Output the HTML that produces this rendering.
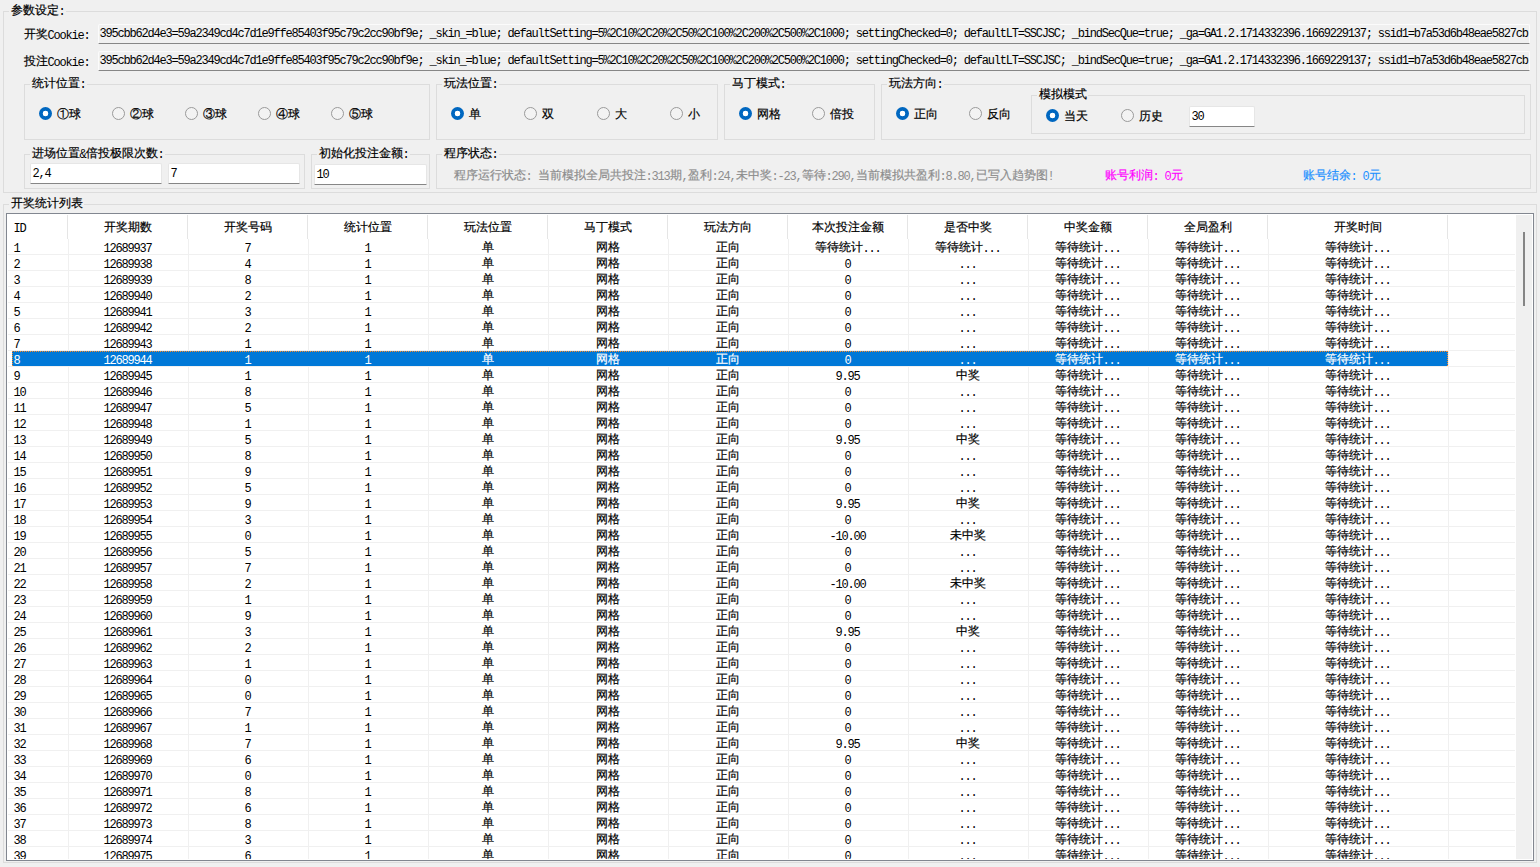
<!DOCTYPE html><html><head><meta charset="utf-8"><style>
*{margin:0;padding:0;box-sizing:border-box}
html,body{width:1540px;height:867px;overflow:hidden;background:#f0f0f0}
body{position:relative;font-family:"Liberation Sans",sans-serif;font-size:12px;color:#000}
.t,.gt,.y{position:absolute;white-space:nowrap;line-height:16px;height:16px;font-size:12px}
.gt{background:#f0f0f0;padding:0 1px 0 2px}
.y{font-family:"Liberation Sans",sans-serif;line-height:16px}
.a{font-family:"Liberation Mono",monospace;letter-spacing:-1.2px;position:relative;left:-0.5px}
.c{display:inline-block;font-family:"Liberation Sans",sans-serif;-webkit-text-stroke:0.2px currentColor;position:relative;top:-1px}
.w{color:#fff}
.g{position:absolute;border:1px solid #dcdcdc}
.r{position:absolute;width:13px;height:13px;border-radius:50%;border:1px solid #9a9a9a;background:#f3f3f3}
.r.on{border:0;background:radial-gradient(circle at 50% 50%,#fff 0,#fff 2.6px,#0067c0 3.1px)}
.tb{position:absolute;border:1px solid #e3e3e3;border-bottom:1px solid #868686;border-radius:2px 2px 0 0}
.lv{position:absolute;left:6px;top:213px;width:1528px;height:648px;border:1px solid #828790;background:#fff}
.sb{position:absolute;left:1516px;top:215px;width:16px;height:644px;background:#f0f0f0}
.thumb{position:absolute;left:1523px;top:232px;width:2px;height:74px;background:#858585}
.hs{position:absolute;top:215px;width:1px;height:24px;background:#e5e5e5}
.vg{position:absolute;top:239px;width:1px;height:620px;background:#f0f0f0}
.hg{position:absolute;left:8px;width:1507px;height:1px;background:#f0f0f0}
.clip{position:absolute;left:0;top:0;width:1532px;height:859px;overflow:hidden}
.sel{position:absolute;left:12px;width:1436px;height:15px;background:#0078d7}
.ft{position:absolute;left:12px;width:1436px;height:1px;background:repeating-linear-gradient(90deg,#ff8a24 0 1px,#0078d7 1px 2px)}
.fl{position:absolute;width:1px;height:15px;background:repeating-linear-gradient(180deg,#ff8a24 0 1px,#0078d7 1px 2px)}
</style></head><body>
<div class="g" style="left:3px;top:11px;width:1534px;height:182px"></div>
<div class="gt" style="left:9px;top:3px"><span class="c" style="width:48px">参数设定</span><span class="a">:</span></div>
<div class="t" style="left:24px;top:27px;"><span class="c" style="width:24px">开奖</span><span class="a">Cookie:</span></div>
<div class="t" style="left:24px;top:54px;"><span class="c" style="width:24px">投注</span><span class="a">Cookie:</span></div>
<div class="tb" style="left:98px;top:24px;width:1432px;height:20px;background:#f0f0f0;border-color:#fbfbfb #fbfbfb #868686 #fbfbfb"></div>
<div class="t" style="left:100px;top:25px;"><span class="a">395cbb62d4e3=59a2349cd4c7d1e9ffe85403f95c79c2cc90bf9e;&#160;_skin_=blue;&#160;defaultSetting=5%2C10%2C20%2C50%2C100%2C200%2C500%2C1000;&#160;settingChecked=0;&#160;defaultLT=SSCJSC;&#160;_bindSecQue=true;&#160;_ga=GA1.2.1714332396.1669229137;&#160;ssid1=b7a53d6b48eae5827cb</span></div>
<div class="tb" style="left:98px;top:51px;width:1432px;height:20px;background:#f0f0f0;border-color:#fbfbfb #fbfbfb #868686 #fbfbfb"></div>
<div class="t" style="left:100px;top:52px;"><span class="a">395cbb62d4e3=59a2349cd4c7d1e9ffe85403f95c79c2cc90bf9e;&#160;_skin_=blue;&#160;defaultSetting=5%2C10%2C20%2C50%2C100%2C200%2C500%2C1000;&#160;settingChecked=0;&#160;defaultLT=SSCJSC;&#160;_bindSecQue=true;&#160;_ga=GA1.2.1714332396.1669229137;&#160;ssid1=b7a53d6b48eae5827cb</span></div>
<div class="g" style="left:24px;top:84px;width:406px;height:56px"></div>
<div class="gt" style="left:30px;top:76px"><span class="c" style="width:48px">统计位置</span><span class="a">:</span></div>
<div class="r on" style="left:39px;top:107px"></div>
<div class="t" style="left:57px;top:107px;"><span class="c" style="width:24px">①球</span></div>
<div class="r" style="left:112px;top:107px"></div>
<div class="t" style="left:130px;top:107px;"><span class="c" style="width:24px">②球</span></div>
<div class="r" style="left:185px;top:107px"></div>
<div class="t" style="left:203px;top:107px;"><span class="c" style="width:24px">③球</span></div>
<div class="r" style="left:258px;top:107px"></div>
<div class="t" style="left:276px;top:107px;"><span class="c" style="width:24px">④球</span></div>
<div class="r" style="left:331px;top:107px"></div>
<div class="t" style="left:349px;top:107px;"><span class="c" style="width:24px">⑤球</span></div>
<div class="g" style="left:436px;top:84px;width:282px;height:56px"></div>
<div class="gt" style="left:442px;top:76px"><span class="c" style="width:48px">玩法位置</span><span class="a">:</span></div>
<div class="r on" style="left:451px;top:107px"></div>
<div class="t" style="left:469px;top:107px;"><span class="c" style="width:12px">单</span></div>
<div class="r" style="left:524px;top:107px"></div>
<div class="t" style="left:542px;top:107px;"><span class="c" style="width:12px">双</span></div>
<div class="r" style="left:597px;top:107px"></div>
<div class="t" style="left:615px;top:107px;"><span class="c" style="width:12px">大</span></div>
<div class="r" style="left:670px;top:107px"></div>
<div class="t" style="left:688px;top:107px;"><span class="c" style="width:12px">小</span></div>
<div class="g" style="left:724px;top:84px;width:151px;height:56px"></div>
<div class="gt" style="left:730px;top:76px"><span class="c" style="width:48px">马丁模式</span><span class="a">:</span></div>
<div class="r on" style="left:739px;top:107px"></div>
<div class="t" style="left:757px;top:107px;"><span class="c" style="width:24px">网格</span></div>
<div class="r" style="left:812px;top:107px"></div>
<div class="t" style="left:830px;top:107px;"><span class="c" style="width:24px">倍投</span></div>
<div class="g" style="left:881px;top:84px;width:650px;height:56px"></div>
<div class="gt" style="left:887px;top:76px"><span class="c" style="width:48px">玩法方向</span><span class="a">:</span></div>
<div class="r on" style="left:896px;top:107px"></div>
<div class="t" style="left:914px;top:107px;"><span class="c" style="width:24px">正向</span></div>
<div class="r" style="left:969px;top:107px"></div>
<div class="t" style="left:987px;top:107px;"><span class="c" style="width:24px">反向</span></div>
<div class="g" style="left:1031px;top:95px;width:494px;height:39px"></div>
<div class="gt" style="left:1037px;top:87px"><span class="c" style="width:48px">模拟模式</span></div>
<div class="r on" style="left:1046px;top:109px"></div>
<div class="t" style="left:1064px;top:109px;"><span class="c" style="width:24px">当天</span></div>
<div class="r" style="left:1121px;top:109px"></div>
<div class="t" style="left:1139px;top:109px;"><span class="c" style="width:24px">历史</span></div>
<div class="tb" style="left:1189px;top:106px;width:66px;height:21px;background:#fff;border-color:#e6e6e6 #e6e6e6 #868686 #e6e6e6"></div>
<div class="t" style="left:1192px;top:108px;"><span class="a">30</span></div>
<div class="g" style="left:24px;top:154px;width:281px;height:35px"></div>
<div class="gt" style="left:30px;top:146px"><span class="c" style="width:48px">进场位置</span><span class="a">&amp;</span><span class="c" style="width:72px">倍投极限次数</span><span class="a">:</span></div>
<div class="tb" style="left:30px;top:163px;width:132px;height:21px;background:#fff;border-color:#e6e6e6 #e6e6e6 #868686 #e6e6e6"></div>
<div class="t" style="left:33px;top:165px;"><span class="a">2,4</span></div>
<div class="tb" style="left:168px;top:163px;width:132px;height:21px;background:#fff;border-color:#e6e6e6 #e6e6e6 #868686 #e6e6e6"></div>
<div class="t" style="left:171px;top:165px;"><span class="a">7</span></div>
<div class="g" style="left:311px;top:154px;width:119px;height:35px"></div>
<div class="gt" style="left:317px;top:146px"><span class="c" style="width:84px">初始化投注金额</span><span class="a">:</span></div>
<div class="tb" style="left:314px;top:164px;width:113px;height:21px;background:#fff;border-color:#e6e6e6 #e6e6e6 #868686 #e6e6e6"></div>
<div class="t" style="left:317px;top:166px;"><span class="a">10</span></div>
<div class="g" style="left:436px;top:154px;width:1095px;height:35px"></div>
<div class="gt" style="left:442px;top:146px"><span class="c" style="width:48px">程序状态</span><span class="a">:</span></div>
<div class="t" style="left:454px;top:168px;color:#8d8d8d"><span class="c" style="width:72px">程序运行状态</span><span class="a">:&#160;</span><span class="c" style="width:108px">当前模拟全局共投注</span><span class="a">:313</span><span class="c" style="width:12px">期</span><span class="a">,</span><span class="c" style="width:24px">盈利</span><span class="a">:24,</span><span class="c" style="width:36px">未中奖</span><span class="a">:-23,</span><span class="c" style="width:24px">等待</span><span class="a">:290,</span><span class="c" style="width:84px">当前模拟共盈利</span><span class="a">:8.80,</span><span class="c" style="width:72px">已写入趋势图</span><span class="a">!</span></div>
<div class="t" style="left:1105px;top:168px;color:#ff00ff"><span class="c" style="width:48px">账号利润</span><span class="a">:&#160;0</span><span class="c" style="width:12px">元</span></div>
<div class="t" style="left:1303px;top:168px;color:#1e90ff"><span class="c" style="width:48px">账号结余</span><span class="a">:&#160;0</span><span class="c" style="width:12px">元</span></div>
<div class="g" style="left:3px;top:204px;width:1534px;height:659px"></div>
<div class="gt" style="left:9px;top:196px"><span class="c" style="width:72px">开奖统计列表</span></div>
<div class="lv"></div>
<div class="sb"></div><div class="thumb"></div>
<div class="hs" style="left:67px"></div>
<div class="t" style="left:14px;top:220px;"><span class="a">ID</span></div>
<div class="hs" style="left:187px"></div>
<div class="t" style="left:104px;top:220px;"><span class="c" style="width:48px">开奖期数</span></div>
<div class="hs" style="left:307px"></div>
<div class="t" style="left:224px;top:220px;"><span class="c" style="width:48px">开奖号码</span></div>
<div class="hs" style="left:427px"></div>
<div class="t" style="left:344px;top:220px;"><span class="c" style="width:48px">统计位置</span></div>
<div class="hs" style="left:547px"></div>
<div class="t" style="left:464px;top:220px;"><span class="c" style="width:48px">玩法位置</span></div>
<div class="hs" style="left:667px"></div>
<div class="t" style="left:584px;top:220px;"><span class="c" style="width:48px">马丁模式</span></div>
<div class="hs" style="left:787px"></div>
<div class="t" style="left:704px;top:220px;"><span class="c" style="width:48px">玩法方向</span></div>
<div class="hs" style="left:907px"></div>
<div class="t" style="left:812px;top:220px;"><span class="c" style="width:72px">本次投注金额</span></div>
<div class="hs" style="left:1027px"></div>
<div class="t" style="left:944px;top:220px;"><span class="c" style="width:48px">是否中奖</span></div>
<div class="hs" style="left:1147px"></div>
<div class="t" style="left:1064px;top:220px;"><span class="c" style="width:48px">中奖金额</span></div>
<div class="hs" style="left:1267px"></div>
<div class="t" style="left:1184px;top:220px;"><span class="c" style="width:48px">全局盈利</span></div>
<div class="hs" style="left:1447px"></div>
<div class="t" style="left:1334px;top:220px;"><span class="c" style="width:48px">开奖时间</span></div>
<div class="clip">
<div class="vg" style="left:68px"></div>
<div class="vg" style="left:188px"></div>
<div class="vg" style="left:308px"></div>
<div class="vg" style="left:428px"></div>
<div class="vg" style="left:548px"></div>
<div class="vg" style="left:668px"></div>
<div class="vg" style="left:788px"></div>
<div class="vg" style="left:908px"></div>
<div class="vg" style="left:1028px"></div>
<div class="vg" style="left:1148px"></div>
<div class="vg" style="left:1268px"></div>
<div class="vg" style="left:1448px"></div>
<div class="hg" style="top:254px"></div>
<div class="hg" style="top:270px"></div>
<div class="hg" style="top:286px"></div>
<div class="hg" style="top:302px"></div>
<div class="hg" style="top:318px"></div>
<div class="hg" style="top:334px"></div>
<div class="hg" style="top:350px"></div>
<div class="hg" style="top:366px"></div>
<div class="hg" style="top:382px"></div>
<div class="hg" style="top:398px"></div>
<div class="hg" style="top:414px"></div>
<div class="hg" style="top:430px"></div>
<div class="hg" style="top:446px"></div>
<div class="hg" style="top:462px"></div>
<div class="hg" style="top:478px"></div>
<div class="hg" style="top:494px"></div>
<div class="hg" style="top:510px"></div>
<div class="hg" style="top:526px"></div>
<div class="hg" style="top:542px"></div>
<div class="hg" style="top:558px"></div>
<div class="hg" style="top:574px"></div>
<div class="hg" style="top:590px"></div>
<div class="hg" style="top:606px"></div>
<div class="hg" style="top:622px"></div>
<div class="hg" style="top:638px"></div>
<div class="hg" style="top:654px"></div>
<div class="hg" style="top:670px"></div>
<div class="hg" style="top:686px"></div>
<div class="hg" style="top:702px"></div>
<div class="hg" style="top:718px"></div>
<div class="hg" style="top:734px"></div>
<div class="hg" style="top:750px"></div>
<div class="hg" style="top:766px"></div>
<div class="hg" style="top:782px"></div>
<div class="hg" style="top:798px"></div>
<div class="hg" style="top:814px"></div>
<div class="hg" style="top:830px"></div>
<div class="hg" style="top:846px"></div>
<div class="hg" style="top:862px"></div>
<div class="sel" style="top:351px"></div><div class="ft" style="top:351px"></div><div class="fl" style="left:12px;top:351px"></div><div class="fl" style="left:1447px;top:351px"></div>
<div class="t" style="left:14px;top:240px;"><span class="a">1</span></div>
<div class="t" style="left:104px;top:240px;"><span class="a">12689937</span></div>
<div class="t" style="left:245px;top:240px;"><span class="a">7</span></div>
<div class="t" style="left:365px;top:240px;"><span class="a">1</span></div>
<div class="t" style="left:482px;top:240px;"><span class="c" style="width:12px">单</span></div>
<div class="t" style="left:596px;top:240px;"><span class="c" style="width:24px">网格</span></div>
<div class="t" style="left:716px;top:240px;"><span class="c" style="width:24px">正向</span></div>
<div class="t" style="left:815px;top:240px;"><span class="c" style="width:48px">等待统计</span><span class="a">...</span></div>
<div class="t" style="left:935px;top:240px;"><span class="c" style="width:48px">等待统计</span><span class="a">...</span></div>
<div class="t" style="left:1055px;top:240px;"><span class="c" style="width:48px">等待统计</span><span class="a">...</span></div>
<div class="t" style="left:1175px;top:240px;"><span class="c" style="width:48px">等待统计</span><span class="a">...</span></div>
<div class="t" style="left:1325px;top:240px;"><span class="c" style="width:48px">等待统计</span><span class="a">...</span></div>
<div class="t" style="left:14px;top:256px;"><span class="a">2</span></div>
<div class="t" style="left:104px;top:256px;"><span class="a">12689938</span></div>
<div class="t" style="left:245px;top:256px;"><span class="a">4</span></div>
<div class="t" style="left:365px;top:256px;"><span class="a">1</span></div>
<div class="t" style="left:482px;top:256px;"><span class="c" style="width:12px">单</span></div>
<div class="t" style="left:596px;top:256px;"><span class="c" style="width:24px">网格</span></div>
<div class="t" style="left:716px;top:256px;"><span class="c" style="width:24px">正向</span></div>
<div class="t" style="left:845px;top:256px;"><span class="a">0</span></div>
<div class="t" style="left:959px;top:256px;"><span class="a">...</span></div>
<div class="t" style="left:1055px;top:256px;"><span class="c" style="width:48px">等待统计</span><span class="a">...</span></div>
<div class="t" style="left:1175px;top:256px;"><span class="c" style="width:48px">等待统计</span><span class="a">...</span></div>
<div class="t" style="left:1325px;top:256px;"><span class="c" style="width:48px">等待统计</span><span class="a">...</span></div>
<div class="t" style="left:14px;top:272px;"><span class="a">3</span></div>
<div class="t" style="left:104px;top:272px;"><span class="a">12689939</span></div>
<div class="t" style="left:245px;top:272px;"><span class="a">8</span></div>
<div class="t" style="left:365px;top:272px;"><span class="a">1</span></div>
<div class="t" style="left:482px;top:272px;"><span class="c" style="width:12px">单</span></div>
<div class="t" style="left:596px;top:272px;"><span class="c" style="width:24px">网格</span></div>
<div class="t" style="left:716px;top:272px;"><span class="c" style="width:24px">正向</span></div>
<div class="t" style="left:845px;top:272px;"><span class="a">0</span></div>
<div class="t" style="left:959px;top:272px;"><span class="a">...</span></div>
<div class="t" style="left:1055px;top:272px;"><span class="c" style="width:48px">等待统计</span><span class="a">...</span></div>
<div class="t" style="left:1175px;top:272px;"><span class="c" style="width:48px">等待统计</span><span class="a">...</span></div>
<div class="t" style="left:1325px;top:272px;"><span class="c" style="width:48px">等待统计</span><span class="a">...</span></div>
<div class="t" style="left:14px;top:288px;"><span class="a">4</span></div>
<div class="t" style="left:104px;top:288px;"><span class="a">12689940</span></div>
<div class="t" style="left:245px;top:288px;"><span class="a">2</span></div>
<div class="t" style="left:365px;top:288px;"><span class="a">1</span></div>
<div class="t" style="left:482px;top:288px;"><span class="c" style="width:12px">单</span></div>
<div class="t" style="left:596px;top:288px;"><span class="c" style="width:24px">网格</span></div>
<div class="t" style="left:716px;top:288px;"><span class="c" style="width:24px">正向</span></div>
<div class="t" style="left:845px;top:288px;"><span class="a">0</span></div>
<div class="t" style="left:959px;top:288px;"><span class="a">...</span></div>
<div class="t" style="left:1055px;top:288px;"><span class="c" style="width:48px">等待统计</span><span class="a">...</span></div>
<div class="t" style="left:1175px;top:288px;"><span class="c" style="width:48px">等待统计</span><span class="a">...</span></div>
<div class="t" style="left:1325px;top:288px;"><span class="c" style="width:48px">等待统计</span><span class="a">...</span></div>
<div class="t" style="left:14px;top:304px;"><span class="a">5</span></div>
<div class="t" style="left:104px;top:304px;"><span class="a">12689941</span></div>
<div class="t" style="left:245px;top:304px;"><span class="a">3</span></div>
<div class="t" style="left:365px;top:304px;"><span class="a">1</span></div>
<div class="t" style="left:482px;top:304px;"><span class="c" style="width:12px">单</span></div>
<div class="t" style="left:596px;top:304px;"><span class="c" style="width:24px">网格</span></div>
<div class="t" style="left:716px;top:304px;"><span class="c" style="width:24px">正向</span></div>
<div class="t" style="left:845px;top:304px;"><span class="a">0</span></div>
<div class="t" style="left:959px;top:304px;"><span class="a">...</span></div>
<div class="t" style="left:1055px;top:304px;"><span class="c" style="width:48px">等待统计</span><span class="a">...</span></div>
<div class="t" style="left:1175px;top:304px;"><span class="c" style="width:48px">等待统计</span><span class="a">...</span></div>
<div class="t" style="left:1325px;top:304px;"><span class="c" style="width:48px">等待统计</span><span class="a">...</span></div>
<div class="t" style="left:14px;top:320px;"><span class="a">6</span></div>
<div class="t" style="left:104px;top:320px;"><span class="a">12689942</span></div>
<div class="t" style="left:245px;top:320px;"><span class="a">2</span></div>
<div class="t" style="left:365px;top:320px;"><span class="a">1</span></div>
<div class="t" style="left:482px;top:320px;"><span class="c" style="width:12px">单</span></div>
<div class="t" style="left:596px;top:320px;"><span class="c" style="width:24px">网格</span></div>
<div class="t" style="left:716px;top:320px;"><span class="c" style="width:24px">正向</span></div>
<div class="t" style="left:845px;top:320px;"><span class="a">0</span></div>
<div class="t" style="left:959px;top:320px;"><span class="a">...</span></div>
<div class="t" style="left:1055px;top:320px;"><span class="c" style="width:48px">等待统计</span><span class="a">...</span></div>
<div class="t" style="left:1175px;top:320px;"><span class="c" style="width:48px">等待统计</span><span class="a">...</span></div>
<div class="t" style="left:1325px;top:320px;"><span class="c" style="width:48px">等待统计</span><span class="a">...</span></div>
<div class="t" style="left:14px;top:336px;"><span class="a">7</span></div>
<div class="t" style="left:104px;top:336px;"><span class="a">12689943</span></div>
<div class="t" style="left:245px;top:336px;"><span class="a">1</span></div>
<div class="t" style="left:365px;top:336px;"><span class="a">1</span></div>
<div class="t" style="left:482px;top:336px;"><span class="c" style="width:12px">单</span></div>
<div class="t" style="left:596px;top:336px;"><span class="c" style="width:24px">网格</span></div>
<div class="t" style="left:716px;top:336px;"><span class="c" style="width:24px">正向</span></div>
<div class="t" style="left:845px;top:336px;"><span class="a">0</span></div>
<div class="t" style="left:959px;top:336px;"><span class="a">...</span></div>
<div class="t" style="left:1055px;top:336px;"><span class="c" style="width:48px">等待统计</span><span class="a">...</span></div>
<div class="t" style="left:1175px;top:336px;"><span class="c" style="width:48px">等待统计</span><span class="a">...</span></div>
<div class="t" style="left:1325px;top:336px;"><span class="c" style="width:48px">等待统计</span><span class="a">...</span></div>
<div class="t w" style="left:14px;top:352px;"><span class="a">8</span></div>
<div class="t w" style="left:104px;top:352px;"><span class="a">12689944</span></div>
<div class="t w" style="left:245px;top:352px;"><span class="a">1</span></div>
<div class="t w" style="left:365px;top:352px;"><span class="a">1</span></div>
<div class="t w" style="left:482px;top:352px;"><span class="c" style="width:12px">单</span></div>
<div class="t w" style="left:596px;top:352px;"><span class="c" style="width:24px">网格</span></div>
<div class="t w" style="left:716px;top:352px;"><span class="c" style="width:24px">正向</span></div>
<div class="t w" style="left:845px;top:352px;"><span class="a">0</span></div>
<div class="t w" style="left:959px;top:352px;"><span class="a">...</span></div>
<div class="t w" style="left:1055px;top:352px;"><span class="c" style="width:48px">等待统计</span><span class="a">...</span></div>
<div class="t w" style="left:1175px;top:352px;"><span class="c" style="width:48px">等待统计</span><span class="a">...</span></div>
<div class="t w" style="left:1325px;top:352px;"><span class="c" style="width:48px">等待统计</span><span class="a">...</span></div>
<div class="t" style="left:14px;top:368px;"><span class="a">9</span></div>
<div class="t" style="left:104px;top:368px;"><span class="a">12689945</span></div>
<div class="t" style="left:245px;top:368px;"><span class="a">1</span></div>
<div class="t" style="left:365px;top:368px;"><span class="a">1</span></div>
<div class="t" style="left:482px;top:368px;"><span class="c" style="width:12px">单</span></div>
<div class="t" style="left:596px;top:368px;"><span class="c" style="width:24px">网格</span></div>
<div class="t" style="left:716px;top:368px;"><span class="c" style="width:24px">正向</span></div>
<div class="t" style="left:836px;top:368px;"><span class="a">9.95</span></div>
<div class="t" style="left:956px;top:368px;"><span class="c" style="width:24px">中奖</span></div>
<div class="t" style="left:1055px;top:368px;"><span class="c" style="width:48px">等待统计</span><span class="a">...</span></div>
<div class="t" style="left:1175px;top:368px;"><span class="c" style="width:48px">等待统计</span><span class="a">...</span></div>
<div class="t" style="left:1325px;top:368px;"><span class="c" style="width:48px">等待统计</span><span class="a">...</span></div>
<div class="t" style="left:14px;top:384px;"><span class="a">10</span></div>
<div class="t" style="left:104px;top:384px;"><span class="a">12689946</span></div>
<div class="t" style="left:245px;top:384px;"><span class="a">8</span></div>
<div class="t" style="left:365px;top:384px;"><span class="a">1</span></div>
<div class="t" style="left:482px;top:384px;"><span class="c" style="width:12px">单</span></div>
<div class="t" style="left:596px;top:384px;"><span class="c" style="width:24px">网格</span></div>
<div class="t" style="left:716px;top:384px;"><span class="c" style="width:24px">正向</span></div>
<div class="t" style="left:845px;top:384px;"><span class="a">0</span></div>
<div class="t" style="left:959px;top:384px;"><span class="a">...</span></div>
<div class="t" style="left:1055px;top:384px;"><span class="c" style="width:48px">等待统计</span><span class="a">...</span></div>
<div class="t" style="left:1175px;top:384px;"><span class="c" style="width:48px">等待统计</span><span class="a">...</span></div>
<div class="t" style="left:1325px;top:384px;"><span class="c" style="width:48px">等待统计</span><span class="a">...</span></div>
<div class="t" style="left:14px;top:400px;"><span class="a">11</span></div>
<div class="t" style="left:104px;top:400px;"><span class="a">12689947</span></div>
<div class="t" style="left:245px;top:400px;"><span class="a">5</span></div>
<div class="t" style="left:365px;top:400px;"><span class="a">1</span></div>
<div class="t" style="left:482px;top:400px;"><span class="c" style="width:12px">单</span></div>
<div class="t" style="left:596px;top:400px;"><span class="c" style="width:24px">网格</span></div>
<div class="t" style="left:716px;top:400px;"><span class="c" style="width:24px">正向</span></div>
<div class="t" style="left:845px;top:400px;"><span class="a">0</span></div>
<div class="t" style="left:959px;top:400px;"><span class="a">...</span></div>
<div class="t" style="left:1055px;top:400px;"><span class="c" style="width:48px">等待统计</span><span class="a">...</span></div>
<div class="t" style="left:1175px;top:400px;"><span class="c" style="width:48px">等待统计</span><span class="a">...</span></div>
<div class="t" style="left:1325px;top:400px;"><span class="c" style="width:48px">等待统计</span><span class="a">...</span></div>
<div class="t" style="left:14px;top:416px;"><span class="a">12</span></div>
<div class="t" style="left:104px;top:416px;"><span class="a">12689948</span></div>
<div class="t" style="left:245px;top:416px;"><span class="a">1</span></div>
<div class="t" style="left:365px;top:416px;"><span class="a">1</span></div>
<div class="t" style="left:482px;top:416px;"><span class="c" style="width:12px">单</span></div>
<div class="t" style="left:596px;top:416px;"><span class="c" style="width:24px">网格</span></div>
<div class="t" style="left:716px;top:416px;"><span class="c" style="width:24px">正向</span></div>
<div class="t" style="left:845px;top:416px;"><span class="a">0</span></div>
<div class="t" style="left:959px;top:416px;"><span class="a">...</span></div>
<div class="t" style="left:1055px;top:416px;"><span class="c" style="width:48px">等待统计</span><span class="a">...</span></div>
<div class="t" style="left:1175px;top:416px;"><span class="c" style="width:48px">等待统计</span><span class="a">...</span></div>
<div class="t" style="left:1325px;top:416px;"><span class="c" style="width:48px">等待统计</span><span class="a">...</span></div>
<div class="t" style="left:14px;top:432px;"><span class="a">13</span></div>
<div class="t" style="left:104px;top:432px;"><span class="a">12689949</span></div>
<div class="t" style="left:245px;top:432px;"><span class="a">5</span></div>
<div class="t" style="left:365px;top:432px;"><span class="a">1</span></div>
<div class="t" style="left:482px;top:432px;"><span class="c" style="width:12px">单</span></div>
<div class="t" style="left:596px;top:432px;"><span class="c" style="width:24px">网格</span></div>
<div class="t" style="left:716px;top:432px;"><span class="c" style="width:24px">正向</span></div>
<div class="t" style="left:836px;top:432px;"><span class="a">9.95</span></div>
<div class="t" style="left:956px;top:432px;"><span class="c" style="width:24px">中奖</span></div>
<div class="t" style="left:1055px;top:432px;"><span class="c" style="width:48px">等待统计</span><span class="a">...</span></div>
<div class="t" style="left:1175px;top:432px;"><span class="c" style="width:48px">等待统计</span><span class="a">...</span></div>
<div class="t" style="left:1325px;top:432px;"><span class="c" style="width:48px">等待统计</span><span class="a">...</span></div>
<div class="t" style="left:14px;top:448px;"><span class="a">14</span></div>
<div class="t" style="left:104px;top:448px;"><span class="a">12689950</span></div>
<div class="t" style="left:245px;top:448px;"><span class="a">8</span></div>
<div class="t" style="left:365px;top:448px;"><span class="a">1</span></div>
<div class="t" style="left:482px;top:448px;"><span class="c" style="width:12px">单</span></div>
<div class="t" style="left:596px;top:448px;"><span class="c" style="width:24px">网格</span></div>
<div class="t" style="left:716px;top:448px;"><span class="c" style="width:24px">正向</span></div>
<div class="t" style="left:845px;top:448px;"><span class="a">0</span></div>
<div class="t" style="left:959px;top:448px;"><span class="a">...</span></div>
<div class="t" style="left:1055px;top:448px;"><span class="c" style="width:48px">等待统计</span><span class="a">...</span></div>
<div class="t" style="left:1175px;top:448px;"><span class="c" style="width:48px">等待统计</span><span class="a">...</span></div>
<div class="t" style="left:1325px;top:448px;"><span class="c" style="width:48px">等待统计</span><span class="a">...</span></div>
<div class="t" style="left:14px;top:464px;"><span class="a">15</span></div>
<div class="t" style="left:104px;top:464px;"><span class="a">12689951</span></div>
<div class="t" style="left:245px;top:464px;"><span class="a">9</span></div>
<div class="t" style="left:365px;top:464px;"><span class="a">1</span></div>
<div class="t" style="left:482px;top:464px;"><span class="c" style="width:12px">单</span></div>
<div class="t" style="left:596px;top:464px;"><span class="c" style="width:24px">网格</span></div>
<div class="t" style="left:716px;top:464px;"><span class="c" style="width:24px">正向</span></div>
<div class="t" style="left:845px;top:464px;"><span class="a">0</span></div>
<div class="t" style="left:959px;top:464px;"><span class="a">...</span></div>
<div class="t" style="left:1055px;top:464px;"><span class="c" style="width:48px">等待统计</span><span class="a">...</span></div>
<div class="t" style="left:1175px;top:464px;"><span class="c" style="width:48px">等待统计</span><span class="a">...</span></div>
<div class="t" style="left:1325px;top:464px;"><span class="c" style="width:48px">等待统计</span><span class="a">...</span></div>
<div class="t" style="left:14px;top:480px;"><span class="a">16</span></div>
<div class="t" style="left:104px;top:480px;"><span class="a">12689952</span></div>
<div class="t" style="left:245px;top:480px;"><span class="a">5</span></div>
<div class="t" style="left:365px;top:480px;"><span class="a">1</span></div>
<div class="t" style="left:482px;top:480px;"><span class="c" style="width:12px">单</span></div>
<div class="t" style="left:596px;top:480px;"><span class="c" style="width:24px">网格</span></div>
<div class="t" style="left:716px;top:480px;"><span class="c" style="width:24px">正向</span></div>
<div class="t" style="left:845px;top:480px;"><span class="a">0</span></div>
<div class="t" style="left:959px;top:480px;"><span class="a">...</span></div>
<div class="t" style="left:1055px;top:480px;"><span class="c" style="width:48px">等待统计</span><span class="a">...</span></div>
<div class="t" style="left:1175px;top:480px;"><span class="c" style="width:48px">等待统计</span><span class="a">...</span></div>
<div class="t" style="left:1325px;top:480px;"><span class="c" style="width:48px">等待统计</span><span class="a">...</span></div>
<div class="t" style="left:14px;top:496px;"><span class="a">17</span></div>
<div class="t" style="left:104px;top:496px;"><span class="a">12689953</span></div>
<div class="t" style="left:245px;top:496px;"><span class="a">9</span></div>
<div class="t" style="left:365px;top:496px;"><span class="a">1</span></div>
<div class="t" style="left:482px;top:496px;"><span class="c" style="width:12px">单</span></div>
<div class="t" style="left:596px;top:496px;"><span class="c" style="width:24px">网格</span></div>
<div class="t" style="left:716px;top:496px;"><span class="c" style="width:24px">正向</span></div>
<div class="t" style="left:836px;top:496px;"><span class="a">9.95</span></div>
<div class="t" style="left:956px;top:496px;"><span class="c" style="width:24px">中奖</span></div>
<div class="t" style="left:1055px;top:496px;"><span class="c" style="width:48px">等待统计</span><span class="a">...</span></div>
<div class="t" style="left:1175px;top:496px;"><span class="c" style="width:48px">等待统计</span><span class="a">...</span></div>
<div class="t" style="left:1325px;top:496px;"><span class="c" style="width:48px">等待统计</span><span class="a">...</span></div>
<div class="t" style="left:14px;top:512px;"><span class="a">18</span></div>
<div class="t" style="left:104px;top:512px;"><span class="a">12689954</span></div>
<div class="t" style="left:245px;top:512px;"><span class="a">3</span></div>
<div class="t" style="left:365px;top:512px;"><span class="a">1</span></div>
<div class="t" style="left:482px;top:512px;"><span class="c" style="width:12px">单</span></div>
<div class="t" style="left:596px;top:512px;"><span class="c" style="width:24px">网格</span></div>
<div class="t" style="left:716px;top:512px;"><span class="c" style="width:24px">正向</span></div>
<div class="t" style="left:845px;top:512px;"><span class="a">0</span></div>
<div class="t" style="left:959px;top:512px;"><span class="a">...</span></div>
<div class="t" style="left:1055px;top:512px;"><span class="c" style="width:48px">等待统计</span><span class="a">...</span></div>
<div class="t" style="left:1175px;top:512px;"><span class="c" style="width:48px">等待统计</span><span class="a">...</span></div>
<div class="t" style="left:1325px;top:512px;"><span class="c" style="width:48px">等待统计</span><span class="a">...</span></div>
<div class="t" style="left:14px;top:528px;"><span class="a">19</span></div>
<div class="t" style="left:104px;top:528px;"><span class="a">12689955</span></div>
<div class="t" style="left:245px;top:528px;"><span class="a">0</span></div>
<div class="t" style="left:365px;top:528px;"><span class="a">1</span></div>
<div class="t" style="left:482px;top:528px;"><span class="c" style="width:12px">单</span></div>
<div class="t" style="left:596px;top:528px;"><span class="c" style="width:24px">网格</span></div>
<div class="t" style="left:716px;top:528px;"><span class="c" style="width:24px">正向</span></div>
<div class="t" style="left:830px;top:528px;"><span class="a">-10.00</span></div>
<div class="t" style="left:950px;top:528px;"><span class="c" style="width:36px">未中奖</span></div>
<div class="t" style="left:1055px;top:528px;"><span class="c" style="width:48px">等待统计</span><span class="a">...</span></div>
<div class="t" style="left:1175px;top:528px;"><span class="c" style="width:48px">等待统计</span><span class="a">...</span></div>
<div class="t" style="left:1325px;top:528px;"><span class="c" style="width:48px">等待统计</span><span class="a">...</span></div>
<div class="t" style="left:14px;top:544px;"><span class="a">20</span></div>
<div class="t" style="left:104px;top:544px;"><span class="a">12689956</span></div>
<div class="t" style="left:245px;top:544px;"><span class="a">5</span></div>
<div class="t" style="left:365px;top:544px;"><span class="a">1</span></div>
<div class="t" style="left:482px;top:544px;"><span class="c" style="width:12px">单</span></div>
<div class="t" style="left:596px;top:544px;"><span class="c" style="width:24px">网格</span></div>
<div class="t" style="left:716px;top:544px;"><span class="c" style="width:24px">正向</span></div>
<div class="t" style="left:845px;top:544px;"><span class="a">0</span></div>
<div class="t" style="left:959px;top:544px;"><span class="a">...</span></div>
<div class="t" style="left:1055px;top:544px;"><span class="c" style="width:48px">等待统计</span><span class="a">...</span></div>
<div class="t" style="left:1175px;top:544px;"><span class="c" style="width:48px">等待统计</span><span class="a">...</span></div>
<div class="t" style="left:1325px;top:544px;"><span class="c" style="width:48px">等待统计</span><span class="a">...</span></div>
<div class="t" style="left:14px;top:560px;"><span class="a">21</span></div>
<div class="t" style="left:104px;top:560px;"><span class="a">12689957</span></div>
<div class="t" style="left:245px;top:560px;"><span class="a">7</span></div>
<div class="t" style="left:365px;top:560px;"><span class="a">1</span></div>
<div class="t" style="left:482px;top:560px;"><span class="c" style="width:12px">单</span></div>
<div class="t" style="left:596px;top:560px;"><span class="c" style="width:24px">网格</span></div>
<div class="t" style="left:716px;top:560px;"><span class="c" style="width:24px">正向</span></div>
<div class="t" style="left:845px;top:560px;"><span class="a">0</span></div>
<div class="t" style="left:959px;top:560px;"><span class="a">...</span></div>
<div class="t" style="left:1055px;top:560px;"><span class="c" style="width:48px">等待统计</span><span class="a">...</span></div>
<div class="t" style="left:1175px;top:560px;"><span class="c" style="width:48px">等待统计</span><span class="a">...</span></div>
<div class="t" style="left:1325px;top:560px;"><span class="c" style="width:48px">等待统计</span><span class="a">...</span></div>
<div class="t" style="left:14px;top:576px;"><span class="a">22</span></div>
<div class="t" style="left:104px;top:576px;"><span class="a">12689958</span></div>
<div class="t" style="left:245px;top:576px;"><span class="a">2</span></div>
<div class="t" style="left:365px;top:576px;"><span class="a">1</span></div>
<div class="t" style="left:482px;top:576px;"><span class="c" style="width:12px">单</span></div>
<div class="t" style="left:596px;top:576px;"><span class="c" style="width:24px">网格</span></div>
<div class="t" style="left:716px;top:576px;"><span class="c" style="width:24px">正向</span></div>
<div class="t" style="left:830px;top:576px;"><span class="a">-10.00</span></div>
<div class="t" style="left:950px;top:576px;"><span class="c" style="width:36px">未中奖</span></div>
<div class="t" style="left:1055px;top:576px;"><span class="c" style="width:48px">等待统计</span><span class="a">...</span></div>
<div class="t" style="left:1175px;top:576px;"><span class="c" style="width:48px">等待统计</span><span class="a">...</span></div>
<div class="t" style="left:1325px;top:576px;"><span class="c" style="width:48px">等待统计</span><span class="a">...</span></div>
<div class="t" style="left:14px;top:592px;"><span class="a">23</span></div>
<div class="t" style="left:104px;top:592px;"><span class="a">12689959</span></div>
<div class="t" style="left:245px;top:592px;"><span class="a">1</span></div>
<div class="t" style="left:365px;top:592px;"><span class="a">1</span></div>
<div class="t" style="left:482px;top:592px;"><span class="c" style="width:12px">单</span></div>
<div class="t" style="left:596px;top:592px;"><span class="c" style="width:24px">网格</span></div>
<div class="t" style="left:716px;top:592px;"><span class="c" style="width:24px">正向</span></div>
<div class="t" style="left:845px;top:592px;"><span class="a">0</span></div>
<div class="t" style="left:959px;top:592px;"><span class="a">...</span></div>
<div class="t" style="left:1055px;top:592px;"><span class="c" style="width:48px">等待统计</span><span class="a">...</span></div>
<div class="t" style="left:1175px;top:592px;"><span class="c" style="width:48px">等待统计</span><span class="a">...</span></div>
<div class="t" style="left:1325px;top:592px;"><span class="c" style="width:48px">等待统计</span><span class="a">...</span></div>
<div class="t" style="left:14px;top:608px;"><span class="a">24</span></div>
<div class="t" style="left:104px;top:608px;"><span class="a">12689960</span></div>
<div class="t" style="left:245px;top:608px;"><span class="a">9</span></div>
<div class="t" style="left:365px;top:608px;"><span class="a">1</span></div>
<div class="t" style="left:482px;top:608px;"><span class="c" style="width:12px">单</span></div>
<div class="t" style="left:596px;top:608px;"><span class="c" style="width:24px">网格</span></div>
<div class="t" style="left:716px;top:608px;"><span class="c" style="width:24px">正向</span></div>
<div class="t" style="left:845px;top:608px;"><span class="a">0</span></div>
<div class="t" style="left:959px;top:608px;"><span class="a">...</span></div>
<div class="t" style="left:1055px;top:608px;"><span class="c" style="width:48px">等待统计</span><span class="a">...</span></div>
<div class="t" style="left:1175px;top:608px;"><span class="c" style="width:48px">等待统计</span><span class="a">...</span></div>
<div class="t" style="left:1325px;top:608px;"><span class="c" style="width:48px">等待统计</span><span class="a">...</span></div>
<div class="t" style="left:14px;top:624px;"><span class="a">25</span></div>
<div class="t" style="left:104px;top:624px;"><span class="a">12689961</span></div>
<div class="t" style="left:245px;top:624px;"><span class="a">3</span></div>
<div class="t" style="left:365px;top:624px;"><span class="a">1</span></div>
<div class="t" style="left:482px;top:624px;"><span class="c" style="width:12px">单</span></div>
<div class="t" style="left:596px;top:624px;"><span class="c" style="width:24px">网格</span></div>
<div class="t" style="left:716px;top:624px;"><span class="c" style="width:24px">正向</span></div>
<div class="t" style="left:836px;top:624px;"><span class="a">9.95</span></div>
<div class="t" style="left:956px;top:624px;"><span class="c" style="width:24px">中奖</span></div>
<div class="t" style="left:1055px;top:624px;"><span class="c" style="width:48px">等待统计</span><span class="a">...</span></div>
<div class="t" style="left:1175px;top:624px;"><span class="c" style="width:48px">等待统计</span><span class="a">...</span></div>
<div class="t" style="left:1325px;top:624px;"><span class="c" style="width:48px">等待统计</span><span class="a">...</span></div>
<div class="t" style="left:14px;top:640px;"><span class="a">26</span></div>
<div class="t" style="left:104px;top:640px;"><span class="a">12689962</span></div>
<div class="t" style="left:245px;top:640px;"><span class="a">2</span></div>
<div class="t" style="left:365px;top:640px;"><span class="a">1</span></div>
<div class="t" style="left:482px;top:640px;"><span class="c" style="width:12px">单</span></div>
<div class="t" style="left:596px;top:640px;"><span class="c" style="width:24px">网格</span></div>
<div class="t" style="left:716px;top:640px;"><span class="c" style="width:24px">正向</span></div>
<div class="t" style="left:845px;top:640px;"><span class="a">0</span></div>
<div class="t" style="left:959px;top:640px;"><span class="a">...</span></div>
<div class="t" style="left:1055px;top:640px;"><span class="c" style="width:48px">等待统计</span><span class="a">...</span></div>
<div class="t" style="left:1175px;top:640px;"><span class="c" style="width:48px">等待统计</span><span class="a">...</span></div>
<div class="t" style="left:1325px;top:640px;"><span class="c" style="width:48px">等待统计</span><span class="a">...</span></div>
<div class="t" style="left:14px;top:656px;"><span class="a">27</span></div>
<div class="t" style="left:104px;top:656px;"><span class="a">12689963</span></div>
<div class="t" style="left:245px;top:656px;"><span class="a">1</span></div>
<div class="t" style="left:365px;top:656px;"><span class="a">1</span></div>
<div class="t" style="left:482px;top:656px;"><span class="c" style="width:12px">单</span></div>
<div class="t" style="left:596px;top:656px;"><span class="c" style="width:24px">网格</span></div>
<div class="t" style="left:716px;top:656px;"><span class="c" style="width:24px">正向</span></div>
<div class="t" style="left:845px;top:656px;"><span class="a">0</span></div>
<div class="t" style="left:959px;top:656px;"><span class="a">...</span></div>
<div class="t" style="left:1055px;top:656px;"><span class="c" style="width:48px">等待统计</span><span class="a">...</span></div>
<div class="t" style="left:1175px;top:656px;"><span class="c" style="width:48px">等待统计</span><span class="a">...</span></div>
<div class="t" style="left:1325px;top:656px;"><span class="c" style="width:48px">等待统计</span><span class="a">...</span></div>
<div class="t" style="left:14px;top:672px;"><span class="a">28</span></div>
<div class="t" style="left:104px;top:672px;"><span class="a">12689964</span></div>
<div class="t" style="left:245px;top:672px;"><span class="a">0</span></div>
<div class="t" style="left:365px;top:672px;"><span class="a">1</span></div>
<div class="t" style="left:482px;top:672px;"><span class="c" style="width:12px">单</span></div>
<div class="t" style="left:596px;top:672px;"><span class="c" style="width:24px">网格</span></div>
<div class="t" style="left:716px;top:672px;"><span class="c" style="width:24px">正向</span></div>
<div class="t" style="left:845px;top:672px;"><span class="a">0</span></div>
<div class="t" style="left:959px;top:672px;"><span class="a">...</span></div>
<div class="t" style="left:1055px;top:672px;"><span class="c" style="width:48px">等待统计</span><span class="a">...</span></div>
<div class="t" style="left:1175px;top:672px;"><span class="c" style="width:48px">等待统计</span><span class="a">...</span></div>
<div class="t" style="left:1325px;top:672px;"><span class="c" style="width:48px">等待统计</span><span class="a">...</span></div>
<div class="t" style="left:14px;top:688px;"><span class="a">29</span></div>
<div class="t" style="left:104px;top:688px;"><span class="a">12689965</span></div>
<div class="t" style="left:245px;top:688px;"><span class="a">0</span></div>
<div class="t" style="left:365px;top:688px;"><span class="a">1</span></div>
<div class="t" style="left:482px;top:688px;"><span class="c" style="width:12px">单</span></div>
<div class="t" style="left:596px;top:688px;"><span class="c" style="width:24px">网格</span></div>
<div class="t" style="left:716px;top:688px;"><span class="c" style="width:24px">正向</span></div>
<div class="t" style="left:845px;top:688px;"><span class="a">0</span></div>
<div class="t" style="left:959px;top:688px;"><span class="a">...</span></div>
<div class="t" style="left:1055px;top:688px;"><span class="c" style="width:48px">等待统计</span><span class="a">...</span></div>
<div class="t" style="left:1175px;top:688px;"><span class="c" style="width:48px">等待统计</span><span class="a">...</span></div>
<div class="t" style="left:1325px;top:688px;"><span class="c" style="width:48px">等待统计</span><span class="a">...</span></div>
<div class="t" style="left:14px;top:704px;"><span class="a">30</span></div>
<div class="t" style="left:104px;top:704px;"><span class="a">12689966</span></div>
<div class="t" style="left:245px;top:704px;"><span class="a">7</span></div>
<div class="t" style="left:365px;top:704px;"><span class="a">1</span></div>
<div class="t" style="left:482px;top:704px;"><span class="c" style="width:12px">单</span></div>
<div class="t" style="left:596px;top:704px;"><span class="c" style="width:24px">网格</span></div>
<div class="t" style="left:716px;top:704px;"><span class="c" style="width:24px">正向</span></div>
<div class="t" style="left:845px;top:704px;"><span class="a">0</span></div>
<div class="t" style="left:959px;top:704px;"><span class="a">...</span></div>
<div class="t" style="left:1055px;top:704px;"><span class="c" style="width:48px">等待统计</span><span class="a">...</span></div>
<div class="t" style="left:1175px;top:704px;"><span class="c" style="width:48px">等待统计</span><span class="a">...</span></div>
<div class="t" style="left:1325px;top:704px;"><span class="c" style="width:48px">等待统计</span><span class="a">...</span></div>
<div class="t" style="left:14px;top:720px;"><span class="a">31</span></div>
<div class="t" style="left:104px;top:720px;"><span class="a">12689967</span></div>
<div class="t" style="left:245px;top:720px;"><span class="a">1</span></div>
<div class="t" style="left:365px;top:720px;"><span class="a">1</span></div>
<div class="t" style="left:482px;top:720px;"><span class="c" style="width:12px">单</span></div>
<div class="t" style="left:596px;top:720px;"><span class="c" style="width:24px">网格</span></div>
<div class="t" style="left:716px;top:720px;"><span class="c" style="width:24px">正向</span></div>
<div class="t" style="left:845px;top:720px;"><span class="a">0</span></div>
<div class="t" style="left:959px;top:720px;"><span class="a">...</span></div>
<div class="t" style="left:1055px;top:720px;"><span class="c" style="width:48px">等待统计</span><span class="a">...</span></div>
<div class="t" style="left:1175px;top:720px;"><span class="c" style="width:48px">等待统计</span><span class="a">...</span></div>
<div class="t" style="left:1325px;top:720px;"><span class="c" style="width:48px">等待统计</span><span class="a">...</span></div>
<div class="t" style="left:14px;top:736px;"><span class="a">32</span></div>
<div class="t" style="left:104px;top:736px;"><span class="a">12689968</span></div>
<div class="t" style="left:245px;top:736px;"><span class="a">7</span></div>
<div class="t" style="left:365px;top:736px;"><span class="a">1</span></div>
<div class="t" style="left:482px;top:736px;"><span class="c" style="width:12px">单</span></div>
<div class="t" style="left:596px;top:736px;"><span class="c" style="width:24px">网格</span></div>
<div class="t" style="left:716px;top:736px;"><span class="c" style="width:24px">正向</span></div>
<div class="t" style="left:836px;top:736px;"><span class="a">9.95</span></div>
<div class="t" style="left:956px;top:736px;"><span class="c" style="width:24px">中奖</span></div>
<div class="t" style="left:1055px;top:736px;"><span class="c" style="width:48px">等待统计</span><span class="a">...</span></div>
<div class="t" style="left:1175px;top:736px;"><span class="c" style="width:48px">等待统计</span><span class="a">...</span></div>
<div class="t" style="left:1325px;top:736px;"><span class="c" style="width:48px">等待统计</span><span class="a">...</span></div>
<div class="t" style="left:14px;top:752px;"><span class="a">33</span></div>
<div class="t" style="left:104px;top:752px;"><span class="a">12689969</span></div>
<div class="t" style="left:245px;top:752px;"><span class="a">6</span></div>
<div class="t" style="left:365px;top:752px;"><span class="a">1</span></div>
<div class="t" style="left:482px;top:752px;"><span class="c" style="width:12px">单</span></div>
<div class="t" style="left:596px;top:752px;"><span class="c" style="width:24px">网格</span></div>
<div class="t" style="left:716px;top:752px;"><span class="c" style="width:24px">正向</span></div>
<div class="t" style="left:845px;top:752px;"><span class="a">0</span></div>
<div class="t" style="left:959px;top:752px;"><span class="a">...</span></div>
<div class="t" style="left:1055px;top:752px;"><span class="c" style="width:48px">等待统计</span><span class="a">...</span></div>
<div class="t" style="left:1175px;top:752px;"><span class="c" style="width:48px">等待统计</span><span class="a">...</span></div>
<div class="t" style="left:1325px;top:752px;"><span class="c" style="width:48px">等待统计</span><span class="a">...</span></div>
<div class="t" style="left:14px;top:768px;"><span class="a">34</span></div>
<div class="t" style="left:104px;top:768px;"><span class="a">12689970</span></div>
<div class="t" style="left:245px;top:768px;"><span class="a">0</span></div>
<div class="t" style="left:365px;top:768px;"><span class="a">1</span></div>
<div class="t" style="left:482px;top:768px;"><span class="c" style="width:12px">单</span></div>
<div class="t" style="left:596px;top:768px;"><span class="c" style="width:24px">网格</span></div>
<div class="t" style="left:716px;top:768px;"><span class="c" style="width:24px">正向</span></div>
<div class="t" style="left:845px;top:768px;"><span class="a">0</span></div>
<div class="t" style="left:959px;top:768px;"><span class="a">...</span></div>
<div class="t" style="left:1055px;top:768px;"><span class="c" style="width:48px">等待统计</span><span class="a">...</span></div>
<div class="t" style="left:1175px;top:768px;"><span class="c" style="width:48px">等待统计</span><span class="a">...</span></div>
<div class="t" style="left:1325px;top:768px;"><span class="c" style="width:48px">等待统计</span><span class="a">...</span></div>
<div class="t" style="left:14px;top:784px;"><span class="a">35</span></div>
<div class="t" style="left:104px;top:784px;"><span class="a">12689971</span></div>
<div class="t" style="left:245px;top:784px;"><span class="a">8</span></div>
<div class="t" style="left:365px;top:784px;"><span class="a">1</span></div>
<div class="t" style="left:482px;top:784px;"><span class="c" style="width:12px">单</span></div>
<div class="t" style="left:596px;top:784px;"><span class="c" style="width:24px">网格</span></div>
<div class="t" style="left:716px;top:784px;"><span class="c" style="width:24px">正向</span></div>
<div class="t" style="left:845px;top:784px;"><span class="a">0</span></div>
<div class="t" style="left:959px;top:784px;"><span class="a">...</span></div>
<div class="t" style="left:1055px;top:784px;"><span class="c" style="width:48px">等待统计</span><span class="a">...</span></div>
<div class="t" style="left:1175px;top:784px;"><span class="c" style="width:48px">等待统计</span><span class="a">...</span></div>
<div class="t" style="left:1325px;top:784px;"><span class="c" style="width:48px">等待统计</span><span class="a">...</span></div>
<div class="t" style="left:14px;top:800px;"><span class="a">36</span></div>
<div class="t" style="left:104px;top:800px;"><span class="a">12689972</span></div>
<div class="t" style="left:245px;top:800px;"><span class="a">6</span></div>
<div class="t" style="left:365px;top:800px;"><span class="a">1</span></div>
<div class="t" style="left:482px;top:800px;"><span class="c" style="width:12px">单</span></div>
<div class="t" style="left:596px;top:800px;"><span class="c" style="width:24px">网格</span></div>
<div class="t" style="left:716px;top:800px;"><span class="c" style="width:24px">正向</span></div>
<div class="t" style="left:845px;top:800px;"><span class="a">0</span></div>
<div class="t" style="left:959px;top:800px;"><span class="a">...</span></div>
<div class="t" style="left:1055px;top:800px;"><span class="c" style="width:48px">等待统计</span><span class="a">...</span></div>
<div class="t" style="left:1175px;top:800px;"><span class="c" style="width:48px">等待统计</span><span class="a">...</span></div>
<div class="t" style="left:1325px;top:800px;"><span class="c" style="width:48px">等待统计</span><span class="a">...</span></div>
<div class="t" style="left:14px;top:816px;"><span class="a">37</span></div>
<div class="t" style="left:104px;top:816px;"><span class="a">12689973</span></div>
<div class="t" style="left:245px;top:816px;"><span class="a">8</span></div>
<div class="t" style="left:365px;top:816px;"><span class="a">1</span></div>
<div class="t" style="left:482px;top:816px;"><span class="c" style="width:12px">单</span></div>
<div class="t" style="left:596px;top:816px;"><span class="c" style="width:24px">网格</span></div>
<div class="t" style="left:716px;top:816px;"><span class="c" style="width:24px">正向</span></div>
<div class="t" style="left:845px;top:816px;"><span class="a">0</span></div>
<div class="t" style="left:959px;top:816px;"><span class="a">...</span></div>
<div class="t" style="left:1055px;top:816px;"><span class="c" style="width:48px">等待统计</span><span class="a">...</span></div>
<div class="t" style="left:1175px;top:816px;"><span class="c" style="width:48px">等待统计</span><span class="a">...</span></div>
<div class="t" style="left:1325px;top:816px;"><span class="c" style="width:48px">等待统计</span><span class="a">...</span></div>
<div class="t" style="left:14px;top:832px;"><span class="a">38</span></div>
<div class="t" style="left:104px;top:832px;"><span class="a">12689974</span></div>
<div class="t" style="left:245px;top:832px;"><span class="a">3</span></div>
<div class="t" style="left:365px;top:832px;"><span class="a">1</span></div>
<div class="t" style="left:482px;top:832px;"><span class="c" style="width:12px">单</span></div>
<div class="t" style="left:596px;top:832px;"><span class="c" style="width:24px">网格</span></div>
<div class="t" style="left:716px;top:832px;"><span class="c" style="width:24px">正向</span></div>
<div class="t" style="left:845px;top:832px;"><span class="a">0</span></div>
<div class="t" style="left:959px;top:832px;"><span class="a">...</span></div>
<div class="t" style="left:1055px;top:832px;"><span class="c" style="width:48px">等待统计</span><span class="a">...</span></div>
<div class="t" style="left:1175px;top:832px;"><span class="c" style="width:48px">等待统计</span><span class="a">...</span></div>
<div class="t" style="left:1325px;top:832px;"><span class="c" style="width:48px">等待统计</span><span class="a">...</span></div>
<div class="t" style="left:14px;top:848px;"><span class="a">39</span></div>
<div class="t" style="left:104px;top:848px;"><span class="a">12689975</span></div>
<div class="t" style="left:245px;top:848px;"><span class="a">6</span></div>
<div class="t" style="left:365px;top:848px;"><span class="a">1</span></div>
<div class="t" style="left:482px;top:848px;"><span class="c" style="width:12px">单</span></div>
<div class="t" style="left:596px;top:848px;"><span class="c" style="width:24px">网格</span></div>
<div class="t" style="left:716px;top:848px;"><span class="c" style="width:24px">正向</span></div>
<div class="t" style="left:845px;top:848px;"><span class="a">0</span></div>
<div class="t" style="left:959px;top:848px;"><span class="a">...</span></div>
<div class="t" style="left:1055px;top:848px;"><span class="c" style="width:48px">等待统计</span><span class="a">...</span></div>
<div class="t" style="left:1175px;top:848px;"><span class="c" style="width:48px">等待统计</span><span class="a">...</span></div>
<div class="t" style="left:1325px;top:848px;"><span class="c" style="width:48px">等待统计</span><span class="a">...</span></div>
</div>
</body></html>
